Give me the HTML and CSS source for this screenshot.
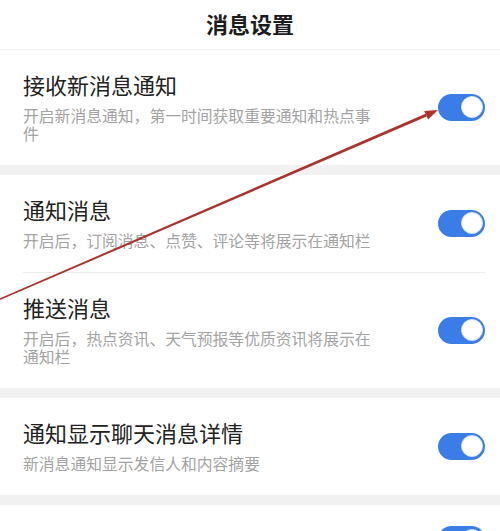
FILE: index.html
```html
<!DOCTYPE html>
<html lang="zh-CN">
<head>
<meta charset="utf-8">
<title>消息设置</title>
<link rel="stylesheet" href="styles.css">
</head>
<body>
<div class="page">
  <header class="header">消息设置</header>

  <section class="group">
    <div class="row">
      <div class="text">
        <div class="title">接收新消息通知</div>
        <div class="desc">开启新消息通知，第一时间获取重要通知和热点事件</div>
      </div>
      <span class="toggle"><span class="knob"></span></span>
    </div>
  </section>

  <div class="band"></div>

  <section class="group">
    <div class="row divided">
      <div class="text">
        <div class="title">通知消息</div>
        <div class="desc">开启后，订阅消息、点赞、评论等将展示在通知栏</div>
      </div>
      <span class="toggle"><span class="knob"></span></span>
    </div>
    <div class="row">
      <div class="text">
        <div class="title">推送消息</div>
        <div class="desc">开启后，热点资讯、天气预报等优质资讯将展示在通知栏</div>
      </div>
      <span class="toggle"><span class="knob"></span></span>
    </div>
  </section>

  <div class="band"></div>

  <section class="group">
    <div class="row">
      <div class="text">
        <div class="title">通知显示聊天消息详情</div>
        <div class="desc">新消息通知显示发信人和内容摘要</div>
      </div>
      <span class="toggle"><span class="knob"></span></span>
    </div>
  </section>

  <div class="band"></div>

  <section class="group">
    <div class="row">
      <div class="text">
        <div class="title">铃声</div>
      </div>
      <span class="toggle"><span class="knob"></span></span>
    </div>
  </section>

  <svg class="arrow" width="500" height="531" viewBox="0 0 500 531" aria-hidden="true">
    <polygon points="-2,300.9 -2,299.1 425.6,113.7 426.7,116.6" fill="#a8342c"/>
    <polygon points="438,110 424.1,110.9 428.1,119.5" fill="#b0332a"/>
  </svg>
</div>
</body>
</html>
```

FILE: styles.css
```css
html, body {
  margin: 0;
  padding: 0;
  background: #ffffff;
}

.page {
  position: relative;
  width: 500px;
  height: 531px;
  overflow: hidden;
  font-family: "Noto Sans CJK SC", "Noto Sans", sans-serif;
  background: #ffffff;
}

.header {
  height: 50px;
  line-height: 46px;
  text-align: center;
  font-size: 22px;
  font-weight: 700;
  color: #1c1c1c;
  border-bottom: 1px solid #f2f2f2;
  box-sizing: border-box;
}

.group {
  background: #ffffff;
}

.band {
  height: 10px;
  background: #f1f1f1;
}

.row {
  display: flex;
  align-items: center;
  justify-content: space-between;
  margin: 0 15px 0 23px;
  padding: 21px 0 22px 0;
}

.row.divided {
  border-bottom: 1px solid #eeeeee;
}

.text {
  width: 360px;
}

.title {
  font-size: 22px;
  line-height: 26px;
  color: #222222;
}

.desc {
  margin-top: 10px;
  font-size: 15.8px;
  line-height: 18px;
  color: #a3a3a3;
}

.toggle {
  position: relative;
  flex: none;
  width: 47px;
  height: 27px;
  border-radius: 14px;
  background: #3b7de6;
}

.knob {
  position: absolute;
  right: 2.5px;
  top: 2.5px;
  width: 22px;
  height: 22px;
  border-radius: 50%;
  background: #ffffff;
  box-sizing: border-box;
  border: 1px solid #d6e4f8;
}

.arrow {
  position: absolute;
  left: 0;
  top: 0;
  pointer-events: none;
}
```
